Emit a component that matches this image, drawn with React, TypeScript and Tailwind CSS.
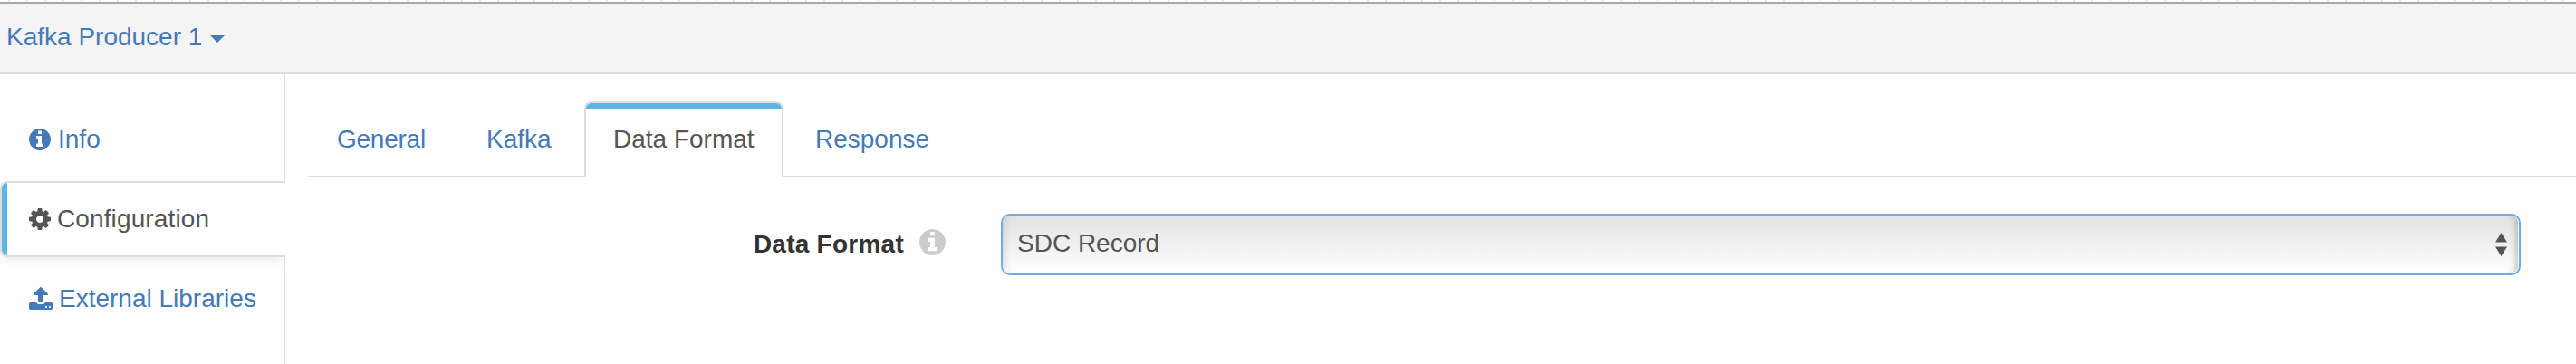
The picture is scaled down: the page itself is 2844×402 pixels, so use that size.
import React from 'react';

const INFO =
  'M1152 1376v-160q0-14-9-23t-23-9h-96v-512q0-14-9-23t-23-9h-320q-14 0-23 9t-9 23v160q0 14 9 23t23 9h96v320h-96q-14 0-23 9t-9 23v160q0 14 9 23t23 9h448q14 0 23-9t9-23zm-128-896v-160q0-14-9-23t-23-9h-192q-14 0-23 9t-9 23v160q0 14 9 23t23 9h192q14 0 23-9t9-23zm640 416q0 209-103 385.5t-279.5 279.5-385.5 103-385.5-103-279.5-279.5-103-385.5 103-385.5 279.5-279.5 385.5-103 385.5 103 279.5 279.5 103 385.5z';
const COG =
  'M1152 896q0-106-75-181t-181-75-181 75-75 181 75 181 181 75 181-75 75-181zm512-109v222q0 12-8 23t-20 13l-185 28q-19 54-39 91 35 50 107 138 10 12 10 25t-9 23q-27 37-99 108t-94 71q-12 0-26-9l-138-108q-44 23-91 38-16 136-29 186-7 28-36 28h-222q-14 0-24.5-8.5t-11.5-21.5l-28-184q-49-16-90-37l-141 107q-10 9-25 9-14 0-25-11-126-114-165-168-7-10-7-23 0-12 8-23 15-21 51-66.5t54-70.5q-27-50-41-99l-183-27q-13-2-21-12.5t-8-23.5v-222q0-12 8-23t19-13l186-28q14-46 39-92-40-57-107-138-10-12-10-24 0-10 9-23 26-36 98.5-107.5t94.5-71.5q13 0 26 10l138 107q44-23 91-38 16-136 29-186 7-28 36-28h222q14 0 24.5 8.5t11.5 21.5l28 184q49 16 90 37l142-107q9-9 24-9 13 0 25 10 129 119 165 170 7 8 7 22 0 12-8 23-15 21-51 66.5t-54 70.5q26 50 41 98l183 28q13 2 21 12.5t8 23.5z';
const UPLOAD =
  'M1344 1472q0-26-19-45t-45-19-45 19-19 45 19 45 45 19 45-19 19-45zm256 0q0-26-19-45t-45-19-45 19-19 45 19 45 45 19 45-19 19-45zm128-224v320q0 40-28 68t-68 28h-1472q-40 0-68-28t-28-68v-320q0-40 28-68t68-28h427q21 56 70.5 92t110.5 36h256q61 0 110.5-36t70.5-92h427q40 0 68 28t28 68zm-325-648q-17 40-59 40h-256v448q0 26-19 45t-45 19h-256q-26 0-45-19t-19-45v-448h-256q-42 0-59-40-17-39 14-69l448-448q18-19 45-19t45 19l448 448q31 30 14 69z';

function Icon({ d, viewBox, className }: { d: string; viewBox: string; className: string }) {
  return (
    <svg viewBox={viewBox} fill="currentColor" className={className} aria-hidden="true">
      <path d={d} />
    </svg>
  );
}

function Header() {
  return (
    <header>
      <div className="h-[2px] bg-[repeating-linear-gradient(to_right,#fff_0px,#fff_9px,#e8e8e8_9px,#e8e8e8_11px,#fff_11px,#fff_20px)]" />
      <div className="flex h-20 items-start border-t-2 border-b-2 border-t-[#a9a9a9] border-b-[#dddddd] bg-[#f4f4f4] pt-[17px] pl-[6px] text-[#447ab7]">
        <span className="w-[226px] pl-px">Kafka Producer 1</span>
        <svg viewBox="0 0 16 8" fill="currentColor" className="mt-[18px] h-2 w-4" aria-hidden="true">
          <path d="M0 0h16L8 8z" />
        </svg>
      </div>
    </header>
  );
}

function Sidebar() {
  return (
    <nav className="flex w-[315px] shrink-0 flex-col">
      <a className="flex h-[118px] items-start rounded-br-[2px] border-r-2 border-[#dddddd] pt-[52px] pl-8 text-[#447ab7]">
        <Icon d={INFO} viewBox="128 128 1536 1536" className="mt-2 h-6 w-6" />
        <span className="ml-2">Info</span>
      </a>
      <a className="z-10 flex h-[84px] rounded-l-lg border-y-2 border-l-2 border-[#dddddd] shadow-[0_6px_10px_-3px_rgba(0,0,0,0.09)] [clip-path:inset(0_0_-16px_0)]">
        <span className="flex flex-1 overflow-hidden rounded-l-[6px] bg-white text-[#555555]">
          <span className="w-[6px] bg-[#5bb5e5]" />
          <span className="flex items-start pt-[20px] pl-6">
            <Icon d={COG} viewBox="128 128 1536 1536" className="mt-2 h-6 w-6" />
            <span className="ml-[7px] tracking-[0.12px]">Configuration</span>
          </span>
        </span>
      </a>
      <a className="flex flex-1 items-start border-r-2 border-[#dddddd] pt-[26px] pl-8 text-[#447ab7]">
        <Icon d={UPLOAD} viewBox="64 64 1664 1600" className="mt-[7px] h-[25px] w-[26px]" />
        <span className="ml-[7px]">External Libraries</span>
      </a>
    </nav>
  );
}

function Tabs() {
  return (
    <div className="flex h-[84px] items-stretch text-[#447ab7]">
      <div className="flex w-[305px] border-b-2 border-[#dddddd] pt-[22px] pl-8">
        <span className="w-[165px] tracking-[-0.25px]">General</span>
        <span>Kafka</span>
      </div>
      <div className="w-[220px] rounded-t-lg rounded-b-[1px] border-x-2 border-t-2 border-[#dddddd]">
        <div className="overflow-hidden rounded-t-[6px] text-[#555555]">
          <div className="h-[6px] bg-[#5bb5e5]" />
          <div className="pt-[14px] pl-[30px]">Data Format</div>
        </div>
      </div>
      <div className="flex-1 border-b-2 border-[#dddddd] pt-[22px] pl-[35px]">Response</div>
    </div>
  );
}

function FormRow() {
  return (
    <div className="mt-10 flex h-[68px] items-start">
      <div className="flex w-[765px] items-start justify-end pt-[14px] pr-[61px]">
        <span className="font-bold tracking-[0.25px] text-[#333333]">Data Format</span>
        <Icon d={INFO} viewBox="128 128 1536 1536" className="mt-[3px] ml-[17px] h-[29px] w-[29px] text-[#cccccc]" />
      </div>
      <div className="h-[68px] w-[1678px] rounded-[10px] border-2 border-[#72abe6] bg-white pr-px">
        <div className="flex h-full items-start justify-between rounded-[8px] bg-linear-to-b from-[#e5e5e5] from-10% to-white pt-[11px] pr-3 pl-[16px] text-[#555555] shadow-[inset_10px_0_8px_-8px_rgba(0,0,0,0.14),inset_-10px_0_8px_-8px_rgba(0,0,0,0.25)]">
          <span>SDC Record</span>
          <svg viewBox="0 0 13 26" fill="currentColor" className="mt-[8px] h-[26px] w-[13px]" aria-hidden="true">
            <path d="M6.5 0L13 10.5H0zM0 15.5h13L6.5 26z" />
          </svg>
        </div>
      </div>
    </div>
  );
}

export default function App() {
  return (
    <div className="flex h-[402px] w-[2844px] flex-col overflow-hidden bg-white font-['Liberation_Sans',Arial,sans-serif] text-[28px] leading-10 whitespace-nowrap">
      <Header />
      <div className="flex flex-1">
        <Sidebar />
        <main className="flex-1 pt-[30px] pl-[25px]">
          <Tabs />
          <FormRow />
        </main>
      </div>
    </div>
  );
}
